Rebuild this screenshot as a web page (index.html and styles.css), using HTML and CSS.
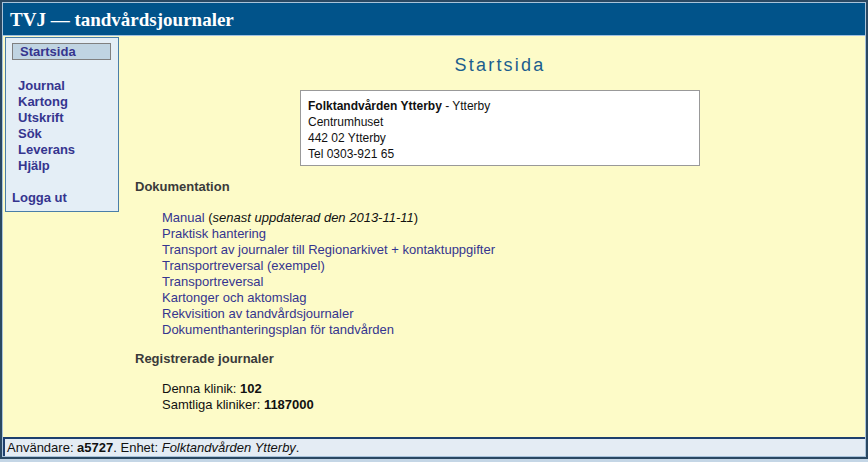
FILE: index.html
```html
<!DOCTYPE html>
<html lang="sv">
<head>
    <meta charset="UTF-8">
    <title>TVJ — tandvårdsjournaler</title>
    <link rel="stylesheet" href="styles.css">
</head>
<body>
<div class="frame">
    <div class="header">TVJ — tandvårdsjournaler</div>
    <div class="main">
        <div class="side">
            <div class="cur"><a href="#">Startsida</a></div>
            <ul class="nav">
                <li><a href="#">Journal</a></li>
                <li><a href="#">Kartong</a></li>
                <li><a href="#">Utskrift</a></li>
                <li><a href="#">Sök</a></li>
                <li><a href="#">Leverans</a></li>
                <li><a href="#">Hjälp</a></li>
            </ul>
            <a href="#" class="logout">Logga ut</a>
        </div>
        <div class="content">
            <h1>Startsida</h1>
            <div class="addr">
                <b>Folktandvården Ytterby</b> - Ytterby<br>
                Centrumhuset<br>
                442 02 Ytterby<br>
                Tel 0303-921 65
            </div>

            <h2>Dokumentation</h2>
            <ul class="docs">
                <li><a href="#">Manual</a> (<i>senast uppdaterad den 2013-11-11</i>)</li>
                <li><a href="#">Praktisk hantering</a></li>
                <li><a href="#">Transport av journaler till Regionarkivet + kontaktuppgifter</a></li>
                <li><a href="#">Transportreversal (exempel)</a></li>
                <li><a href="#">Transportreversal</a></li>
                <li><a href="#">Kartonger och aktomslag</a></li>
                <li><a href="#">Rekvisition av tandvårdsjournaler</a></li>
                <li><a href="#">Dokumenthanteringsplan för tandvården</a></li>
            </ul>

            <h2>Registrerade journaler</h2>
            <ul class="stats">
                <li>Denna klinik: <b>102</b></li>
                <li>Samtliga kliniker: <b>1187000</b></li>
            </ul>
        </div>
    </div>
    <div class="footer">Användare: <b>a5727</b>. Enhet: <i>Folktandvården Ytterby</i>.</div>
</div>
</body>
</html>
```

FILE: styles.css
```css
*{
    margin: 0;
    padding: 0;
    list-style: none;
    box-sizing: border-box;
}
body{
    background: #c4d6e6;
    font-family: "Liberation Sans", Arial, sans-serif;
    font-size: 13px;
    color: #111;
}
a{
    color: #35358f;
    text-decoration: none;
}
.frame{
    height: 459px;
    border: 2px solid #2a4862;
    padding: 1px;
    background: #a9c3da;
    display: flex;
    flex-direction: column;
}
.header{
    height: 33px;
    background: #01538a;
    border-bottom: 1px solid #a0c0e0;
    color: #fff;
    font-family: "Liberation Serif", "Times New Roman", serif;
    font-weight: bold;
    font-size: 19px;
    line-height: 34px;
    padding-left: 7px;
}
.main{
    height: 401px;
    background: #fdfbc8;
    display: flex;
    align-items: flex-start;
}
.side{
    width: 114px;
    margin: 1px 0 0 2px;
    background: #e4eef6;
    border: 1px solid #4a7ea8;
    padding: 5px 6px 5px 6px;
    font-size: 13px;
    font-weight: bold;
    line-height: 16px;
}
.cur{
    width: 99px;
    height: 17px;
    background: #c0d4e2;
    border: 1px solid #808080;
    padding-left: 7px;
    line-height: 15px;
}
.nav{
    margin: 18px 0 16px 6px;
}
.logout{
    display: block;
}
.content{
    flex: 1;
    padding: 0 0 0 16px;
}
h1{
    text-align: center;
    font-size: 18px;
    font-weight: normal;
    letter-spacing: 2.2px;
    color: #1b5e8e;
    line-height: 22px;
    margin: 18px 0 14px;
}
.addr{
    width: 400px;
    margin: 0 auto;
    background: #fff;
    border: 1px solid #999;
    padding: 7px 7px 3px;
    font-size: 12px;
    line-height: 16px;
}
h2{
    font-size: 13px;
    font-weight: bold;
    color: #3a3a3a;
    line-height: 16px;
    margin: 13px 0 15px;
}
.docs, .stats{
    margin-left: 27px;
    line-height: 16px;
}
.stats{
    margin-top: -1px;
}
.stats li{
    color: #111;
    height: 16px;
}
.footer{
    height: 19px;
    background: #e4ecf4;
    border-top: 2px solid #1d3f6e;
    border-left: 2px solid #1d3f6e;
    padding-left: 2px;
    line-height: 17px;
}
```
